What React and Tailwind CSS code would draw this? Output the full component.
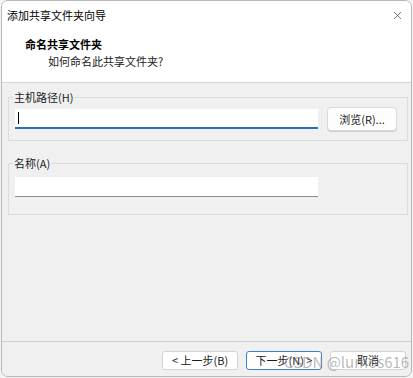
import { X } from 'lucide-react'

const font = { fontFamily: '"Noto Sans CJK SC", "Noto Sans", sans-serif' }

function GroupBox({ label, children, className = '' }) {
  return (
    <fieldset className={`mx-[6px] mr-[3px] border border-[#dcdcdc] px-[6px] ${className}`}>
      <legend className="-ml-[2px] px-[1px] text-[11px] leading-[14px] text-[#1a1a1a]">{label}</legend>
      {children}
    </fieldset>
  )
}

function Button({ children, primary }) {
  return (
    <button
      type="button"
      className={`h-[19px] w-[76px] rounded-[3px] bg-white text-[11px] leading-none text-[#1a1a1a] ${
        primary ? 'border border-[#3a7fd0]' : 'border border-[#d4d4d4]'
      }`}
    >
      {children}
    </button>
  )
}

export default function App() {
  return (
    <div className="relative h-[378px] w-[413px] overflow-hidden bg-[#f3f3f3]" style={font}>
      <div className="ml-[1px] flex h-[377px] w-[411px] flex-col overflow-hidden rounded-[7px] border border-[#b8b8b8]">
        {/* title bar */}
        <div className="flex h-[29px] items-center justify-between bg-white pl-[5px] pr-[7px]">
          <span className="text-[11px] text-black">添加共享文件夹向导</span>
          <X className="h-[13px] w-[13px] text-[#333]" strokeWidth={1.2} />
        </div>

        {/* header */}
        <div className="h-[53px] border-b border-[#d6d6d6] bg-white pl-[23px] pt-[7px]">
          <div className="text-[11px] font-bold leading-[15px] text-black">命名共享文件夹</div>
          <div className="ml-[23px] mt-[2px] text-[11px] leading-[15px] text-[#1a1a1a]">如何命名此共享文件夹?</div>
        </div>

        {/* body */}
        <div className="flex-1 bg-[#f0f0f0] pt-[7px]">
          <GroupBox label="主机路径(H)" className="pb-[9px]">
            <div className="mt-[3px] flex items-center gap-[9px]">
              <div className="relative h-[20px] w-[303px] border-b-2 border-[#2a6fc4] bg-white">
                <span className="absolute left-[3px] top-[3px] h-[12px] w-px bg-black" />
              </div>
              <button
                type="button"
                className="h-[24px] w-[70px] rounded-[4px] border border-[#dadada] bg-[#fdfdfd] text-[11px] text-[#1a1a1a] shadow-[0_1px_0_#cfcfcf]"
              >
                浏览(R)...
              </button>
            </div>
          </GroupBox>

          <GroupBox label="名称(A)" className="mt-[15px] pb-[17px]">
            <div className="mt-[7px] h-[20px] w-[303px] border-b border-[#8c8c8c] bg-white" />
          </GroupBox>
        </div>

        {/* footer */}
        <div className="flex h-[35px] items-start justify-end gap-[8px] border-t border-[#cfcfcf] bg-[#f0f0f0] pr-[5px] pt-[9px]">
          <Button>&lt; 上一步(B)</Button>
          <Button primary>下一步(N) &gt;</Button>
          <Button>取消</Button>
        </div>
      </div>

      {/* watermark */}
      <div className="pointer-events-none absolute left-[284px] top-[353px] text-[15px] leading-[18px] text-[#8a8a8a]/60">
        CSDN @lumos616
      </div>
    </div>
  )
}
